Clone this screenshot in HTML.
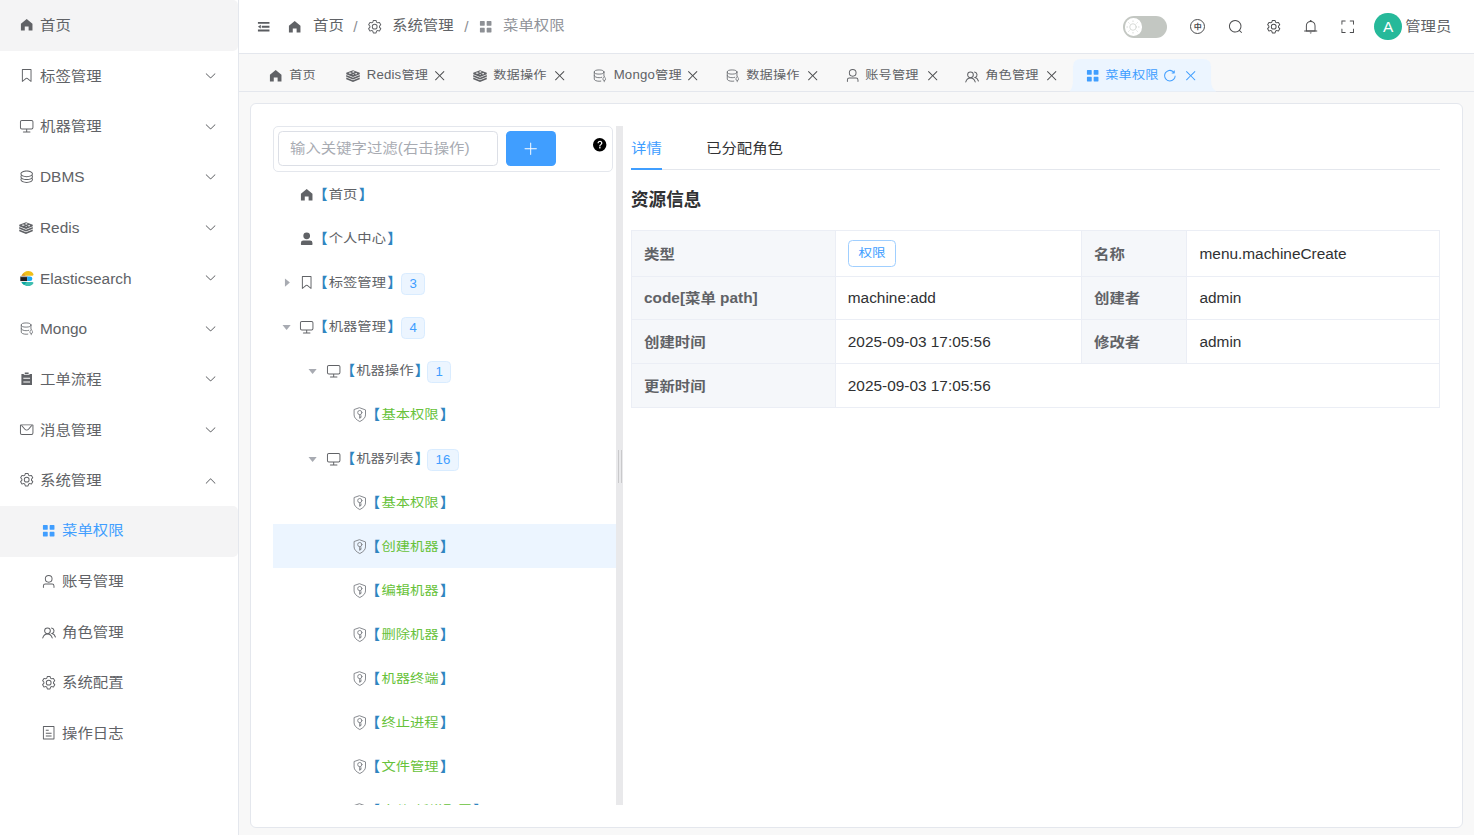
<!DOCTYPE html>
<html lang="zh-CN"><head><meta charset="utf-8"><title>菜单权限</title>
<style>
html,body{margin:0;padding:0}
body{width:1474px;height:835px;overflow:hidden;position:relative;background:#f8f8f8;font-family:"Liberation Sans","Noto Sans CJK SC",sans-serif;-webkit-font-smoothing:antialiased}
.b,.t,.ic{position:absolute;box-sizing:border-box}
.t{white-space:nowrap}
.c{display:inline-block;transform:translateY(.06em) scaleY(.86)}
.k .c{transform:translateY(.035em) scaleY(.98)}
.ns .c{transform:translateY(.03em) scaleY(1.03)}
.ic{display:block;overflow:visible}
</style></head><body>
<div class="b" style="left:0px;top:0px;width:239px;height:835px;background:#fff;border-right:1px solid #e4e7ed"></div>
<div class="b" style="left:0px;top:0px;width:237.6px;height:50.6px;background:#f4f4f5;border-radius:0 5px 5px 0"></div>
<div class="b" style="left:0px;top:506.2px;width:237.6px;height:50.5px;background:#f4f4f5;border-radius:0 5px 5px 0"></div>
<svg class="ic" style="left:18.7px;top:17.18px;width:15.4px;height:15.4px;" viewBox="0 0 1024 1024" fill="#606266"><path d="M512 128 128 447.936V896h255.936V640H640v256h255.936V447.936z"/></svg>
<div class="t " style="left:40px;top:13px;height:24px;line-height:24px;font-size:15.4px;color:#606266;"><span class="c">首页</span></div>
<svg class="ic" style="left:18.7px;top:67.76px;width:15.4px;height:15.4px;" viewBox="0 0 1024 1024" fill="#606266"><path d="M256 128v698.88l196.032-156.864a96 96 0 0 1 119.936 0L768 826.816V128zm-32-64h576a32 32 0 0 1 32 32v797.44a32 32 0 0 1-51.968 24.96L531.968 720a32 32 0 0 0-39.936 0L243.968 918.4A32 32 0 0 1 192 893.44V96a32 32 0 0 1 32-32"/></svg>
<div class="t " style="left:40px;top:64px;height:24px;line-height:24px;font-size:15.4px;color:#606266;"><span class="c">标签管理</span></div>
<svg class="ic" style="left:203.7px;top:68.96px;width:13.2px;height:13.2px;" viewBox="0 0 1024 1024" fill="#606266"><path d="M831.872 340.864 512 652.672 192.128 340.864a30.592 30.592 0 0 0-42.752 0 29.12 29.12 0 0 0 0 41.6L489.664 714.24a32 32 0 0 0 44.672 0l340.288-331.712a29.12 29.12 0 0 0 0-41.728 30.592 30.592 0 0 0-42.752 0z"/></svg>
<svg class="ic" style="left:18.7px;top:118.33px;width:15.4px;height:15.4px;" viewBox="0 0 1024 1024" fill="#606266"><path d="M544 768v128h192a32 32 0 1 1 0 64H288a32 32 0 1 1 0-64h192V768H192A128 128 0 0 1 64 640V256a128 128 0 0 1 128-128h640a128 128 0 0 1 128 128v384a128 128 0 0 1-128 128zM192 192a64 64 0 0 0-64 64v384a64 64 0 0 0 64 64h640a64 64 0 0 0 64-64V256a64 64 0 0 0-64-64z"/></svg>
<div class="t " style="left:40px;top:114px;height:24px;line-height:24px;font-size:15.4px;color:#606266;"><span class="c">机器管理</span></div>
<svg class="ic" style="left:203.7px;top:119.53px;width:13.2px;height:13.2px;" viewBox="0 0 1024 1024" fill="#606266"><path d="M831.872 340.864 512 652.672 192.128 340.864a30.592 30.592 0 0 0-42.752 0 29.12 29.12 0 0 0 0 41.6L489.664 714.24a32 32 0 0 0 44.672 0l340.288-331.712a29.12 29.12 0 0 0 0-41.728 30.592 30.592 0 0 0-42.752 0z"/></svg>
<svg class="ic" style="left:18.7px;top:168.9px;width:15.4px;height:15.4px;" viewBox="0 0 1024 1024" fill="#606266"><path d="m161.92 580.736 29.888 58.88C171.328 659.776 160 681.728 160 704c0 82.304 155.328 160 352 160s352-77.696 352-160c0-22.272-11.392-44.16-31.808-64.32l30.464-58.432C903.936 615.808 928 657.664 928 704c0 129.728-188.544 224-416 224S96 833.728 96 704c0-46.592 24.32-88.576 65.92-123.264"/><path d="m161.92 388.736 29.888 58.88C171.328 467.84 160 489.792 160 512c0 82.304 155.328 160 352 160s352-77.696 352-160c0-22.272-11.392-44.16-31.808-64.32l30.464-58.432C903.936 423.808 928 465.664 928 512c0 129.728-188.544 224-416 224S96 641.728 96 512c0-46.592 24.32-88.576 65.92-123.264"/><path d="M512 544c-227.456 0-416-94.272-416-224S284.544 96 512 96s416 94.272 416 224-188.544 224-416 224m0-64c196.672 0 352-77.696 352-160S708.672 160 512 160s-352 77.696-352 160 155.328 160 352 160"/></svg>
<div class="t " style="left:40px;top:165px;height:24px;line-height:24px;font-size:15.4px;color:#606266;">DBMS</div>
<svg class="ic" style="left:203.7px;top:170.1px;width:13.2px;height:13.2px;" viewBox="0 0 1024 1024" fill="#606266"><path d="M831.872 340.864 512 652.672 192.128 340.864a30.592 30.592 0 0 0-42.752 0 29.12 29.12 0 0 0 0 41.6L489.664 714.24a32 32 0 0 0 44.672 0l340.288-331.712a29.12 29.12 0 0 0 0-41.728 30.592 30.592 0 0 0-42.752 0z"/></svg>
<svg class="ic" style="left:19.3px;top:221.87px;width:14.0px;height:12.0px;" viewBox="0 0 24 20.6"><g fill="#606266"><path d="M12 .3 23.600 4.900v2.500L12 12 .4 7.400V4.900z"/><path d="M.4 8.500 12 13.100 23.600 8.500v3.200L12 16.300.4 11.700z"/><path d="M.4 12.800 12 17.400 23.600 12.800v3.200L12 20.600.4 16z"/></g><g fill="#fff"><ellipse cx="7.200" cy="5.300" rx="2.700" ry="1.150"/><path d="M12.600 1.600l.8 1 1.700.1-1.200.8.400 1.100-1.700-.5-1.700.5.400-1.100-1.200-.8 1.700-.1z"/><path d="M14.200 6.600 19.400 4.600 17.600 7.700z"/><path d="M10.300 7.900 12.600 7l1.200 1.700z"/></g></svg>
<div class="t " style="left:40px;top:216px;height:24px;line-height:24px;font-size:15.4px;color:#606266;">Redis</div>
<svg class="ic" style="left:203.7px;top:220.67px;width:13.2px;height:13.2px;" viewBox="0 0 1024 1024" fill="#606266"><path d="M831.872 340.864 512 652.672 192.128 340.864a30.592 30.592 0 0 0-42.752 0 29.12 29.12 0 0 0 0 41.6L489.664 714.24a32 32 0 0 0 44.672 0l340.288-331.712a29.12 29.12 0 0 0 0-41.728 30.592 30.592 0 0 0-42.752 0z"/></svg>
<svg class="ic" style="left:19.7px;top:270.8px;width:13.5px;height:15.1px;" viewBox="0 0 13.5 15.1"><path d="M1.400 4.800C2.900 1.700 5.500 0 8.200 0c2.400 0 4.400 1.300 5.200 3.100.300.800-.2 1.700-1.100 1.700z" fill="#f0bf1a"/><path d="M1.400 4.800 3.700 2.200 5.600 4.800z" fill="#e2962c"/><path d="M.3 5.400h7v4.700h-7z" fill="#231f20"/><path d="M.3 5.400h6.800v.7H.3z" fill="#d0d0d0"/><path d="M7.200 5.400h2.800a2.350 2.350 0 0 1 0 4.700H7.200z" fill="#1ba9f5"/><path d="M1.400 10.900h10.900c.9 0 1.400.9 1 1.600-.9 1.500-2.800 2.600-5.100 2.600-2.700 0-5.300-1.500-6.800-4.200z" fill="#3ebeb0"/><path d="M1.400 10.900h5.300l-2.600 3c-1.100-.7-2-1.700-2.700-3z" fill="#07a5a0"/></svg>
<div class="t " style="left:40px;top:267px;height:24px;line-height:24px;font-size:15.4px;color:#606266;">Elasticsearch</div>
<svg class="ic" style="left:203.7px;top:271.23px;width:13.2px;height:13.2px;" viewBox="0 0 1024 1024" fill="#606266"><path d="M831.872 340.864 512 652.672 192.128 340.864a30.592 30.592 0 0 0-42.752 0 29.12 29.12 0 0 0 0 41.6L489.664 714.24a32 32 0 0 0 44.672 0l340.288-331.712a29.12 29.12 0 0 0 0-41.728 30.592 30.592 0 0 0-42.752 0z"/></svg>
<svg class="ic" style="left:19.7px;top:321.71px;width:13.4px;height:13.4px;" viewBox="0 0 23 23"><g fill="none" stroke="#696c71" stroke-width="1.5" stroke-linecap="round"><ellipse cx="10.5" cy="5.2" rx="8.3" ry="3.6"/><path d="M2.2 5.2v12.2c0 2 3.7 3.6 8.3 3.6 1 0 2-.08 2.9-.2"/><path d="M18.8 5.2v6.2"/><path d="M2.2 11.3c0 2 3.7 3.6 8.3 3.6 1.7 0 3.300-.2 4.600-.6"/><path d="M19.300 13.2c-1.800 1.800-2.300 3.200-2.300 4.200a2.300 2.300 0 0 0 4.600 0c0-1-.5-2.400-2.300-4.200zM19.300 19.700v2.200" stroke-width="1.3"/></g></svg>
<div class="t " style="left:40px;top:317px;height:24px;line-height:24px;font-size:15.4px;color:#606266;">Mongo</div>
<svg class="ic" style="left:203.7px;top:321.81px;width:13.2px;height:13.2px;" viewBox="0 0 1024 1024" fill="#606266"><path d="M831.872 340.864 512 652.672 192.128 340.864a30.592 30.592 0 0 0-42.752 0 29.12 29.12 0 0 0 0 41.6L489.664 714.24a32 32 0 0 0 44.672 0l340.288-331.712a29.12 29.12 0 0 0 0-41.728 30.592 30.592 0 0 0-42.752 0z"/></svg>
<svg class="ic" style="left:18.7px;top:371.18px;width:15.4px;height:15.4px;" viewBox="0 0 1024 1024" fill="#606266"><path d="M704 192h160v736H160V192h160v64h384zM288 512h448v-64H288zm0 256h448v-64H288zm96-576V96h256v96z"/></svg>
<div class="t " style="left:40px;top:367px;height:24px;line-height:24px;font-size:15.4px;color:#606266;"><span class="c">工单流程</span></div>
<svg class="ic" style="left:203.7px;top:372.38px;width:13.2px;height:13.2px;" viewBox="0 0 1024 1024" fill="#606266"><path d="M831.872 340.864 512 652.672 192.128 340.864a30.592 30.592 0 0 0-42.752 0 29.12 29.12 0 0 0 0 41.6L489.664 714.24a32 32 0 0 0 44.672 0l340.288-331.712a29.12 29.12 0 0 0 0-41.728 30.592 30.592 0 0 0-42.752 0z"/></svg>
<svg class="ic" style="left:18.7px;top:421.75px;width:15.4px;height:15.4px;" viewBox="0 0 1024 1024" fill="#606266"><path d="M128 224v512a64 64 0 0 0 64 64h640a64 64 0 0 0 64-64V224zm0-64h768a64 64 0 0 1 64 64v512a128 128 0 0 1-128 128H192A128 128 0 0 1 64 736V224a64 64 0 0 1 64-64"/><path d="M904 224 656.512 506.88a192 192 0 0 1-289.024 0L120 224zm-698.944 0 210.56 240.704a128 128 0 0 0 192.704 0L818.944 224z"/></svg>
<div class="t " style="left:40px;top:418px;height:24px;line-height:24px;font-size:15.4px;color:#606266;"><span class="c">消息管理</span></div>
<svg class="ic" style="left:203.7px;top:422.95px;width:13.2px;height:13.2px;" viewBox="0 0 1024 1024" fill="#606266"><path d="M831.872 340.864 512 652.672 192.128 340.864a30.592 30.592 0 0 0-42.752 0 29.12 29.12 0 0 0 0 41.6L489.664 714.24a32 32 0 0 0 44.672 0l340.288-331.712a29.12 29.12 0 0 0 0-41.728 30.592 30.592 0 0 0-42.752 0z"/></svg>
<svg class="ic" style="left:18.7px;top:472.31px;width:15.4px;height:15.4px;" viewBox="0 0 1024 1024" fill="#606266"><path d="M600.704 64a32 32 0 0 1 30.464 22.208l35.2 109.376c14.784 7.232 28.928 15.36 42.432 24.512l112.384-24.192a32 32 0 0 1 34.432 15.36L944.32 364.8a32 32 0 0 1-4.032 37.504l-77.12 85.12a357.12 357.12 0 0 1 0 49.024l77.12 85.248a32 32 0 0 1 4.032 37.504l-88.704 153.6a32 32 0 0 1-34.432 15.296L708.8 803.904c-13.44 9.088-27.648 17.28-42.368 24.512l-35.264 109.376A32 32 0 0 1 600.704 960H423.296a32 32 0 0 1-30.464-22.208L357.696 828.48a351.616 351.616 0 0 1-42.56-24.64l-112.32 24.256a32 32 0 0 1-34.432-15.36L79.68 659.2a32 32 0 0 1 4.032-37.504l77.12-85.248a357.12 357.12 0 0 1 0-48.896l-77.12-85.248A32 32 0 0 1 79.68 364.8l88.704-153.6a32 32 0 0 1 34.432-15.296l112.32 24.256c13.568-9.152 27.776-17.408 42.56-24.64l35.2-109.312A32 32 0 0 1 423.232 64H600.64zm-23.424 64H446.72l-36.352 113.088-24.512 11.968a294.113 294.113 0 0 0-34.816 20.096l-22.656 15.36-116.224-25.088-65.28 113.152 79.68 88.192-1.92 27.136a293.12 293.12 0 0 0 0 40.192l1.92 27.136-79.808 88.192 65.344 113.152 116.224-25.024 22.656 15.296a294.113 294.113 0 0 0 34.816 20.096l24.512 11.968L446.72 896h130.688l36.48-113.152 24.448-11.904a288.282 288.282 0 0 0 34.752-20.096l22.592-15.296 116.288 25.024 65.28-113.152-79.744-88.192 1.92-27.136a293.12 293.12 0 0 0 0-40.256l-1.92-27.136 79.808-88.128-65.344-113.152-116.288 24.96-22.592-15.232a287.616 287.616 0 0 0-34.752-20.096l-24.448-11.904L577.344 128zM512 320a192 192 0 1 1 0 384 192 192 0 0 1 0-384m0 64a128 128 0 1 0 0 256 128 128 0 0 0 0-256"/></svg>
<div class="t " style="left:40px;top:468px;height:24px;line-height:24px;font-size:15.4px;color:#606266;"><span class="c">系统管理</span></div>
<svg class="ic" style="left:203.7px;top:473.51px;width:13.2px;height:13.2px;" viewBox="0 0 1024 1024" fill="#606266"><path d="m488.832 344.32-339.84 356.672a32 32 0 0 0 0 44.16l.384.384a29.44 29.44 0 0 0 42.688 0l320-335.872 319.872 335.872a29.44 29.44 0 0 0 42.688 0l.384-.384a32 32 0 0 0 0-44.16L535.168 344.32a32 32 0 0 0-46.336 0"/></svg>
<svg class="ic" style="left:40.7px;top:522.98px;width:15.4px;height:15.4px;" viewBox="0 0 1024 1024" fill="#409eff"><path d="M160 448a32 32 0 0 1-32-32V160.064a32 32 0 0 1 32-32h256a32 32 0 0 1 32 32V416a32 32 0 0 1-32 32zm448 0a32 32 0 0 1-32-32V160.064a32 32 0 0 1 32-32h255.936a32 32 0 0 1 32 32V416a32 32 0 0 1-32 32zM160 896a32 32 0 0 1-32-32V608a32 32 0 0 1 32-32h256a32 32 0 0 1 32 32v256a32 32 0 0 1-32 32zm448 0a32 32 0 0 1-32-32V608a32 32 0 0 1 32-32h255.936a32 32 0 0 1 32 32v256a32 32 0 0 1-32 32z"/></svg>
<div class="t " style="left:62px;top:518px;height:24px;line-height:24px;font-size:15.4px;color:#409eff;"><span class="c">菜单权限</span></div>
<svg class="ic" style="left:40.7px;top:573.55px;width:15.4px;height:15.4px;" viewBox="0 0 1024 1024" fill="#606266"><path d="M512 512a192 192 0 1 0 0-384 192 192 0 0 0 0 384m0 64a256 256 0 1 1 0-512 256 256 0 0 1 0 512m320 320v-96a96 96 0 0 0-96-96H288a96 96 0 0 0-96 96v96a32 32 0 1 1-64 0v-96a160 160 0 0 1 160-160h448a160 160 0 0 1 160 160v96a32 32 0 1 1-64 0"/></svg>
<div class="t " style="left:62px;top:569px;height:24px;line-height:24px;font-size:15.4px;color:#606266;"><span class="c">账号管理</span></div>
<svg class="ic" style="left:41.5px;top:627.02px;width:14.2px;height:11.4px;" viewBox="0 0 22.400 18.400"><g fill="none" stroke="#606266" stroke-width="1.65" stroke-linecap="round"><circle cx="8.6" cy="6.200" r="4.600"/><path d="M1 17.600c1.100-4 3.900-6.300 7.600-6.300s6.500 2.300 7.600 6.300"/><path d="M15.200 1.700a4.600 4.600 0 0 1 .9 8.900c2.400.7 4.300 2.600 5.300 5.500"/></g></svg>
<div class="t " style="left:62px;top:620px;height:24px;line-height:24px;font-size:15.4px;color:#606266;"><span class="c">角色管理</span></div>
<svg class="ic" style="left:40.7px;top:674.69px;width:15.4px;height:15.4px;" viewBox="0 0 1024 1024" fill="#606266"><path d="M600.704 64a32 32 0 0 1 30.464 22.208l35.2 109.376c14.784 7.232 28.928 15.36 42.432 24.512l112.384-24.192a32 32 0 0 1 34.432 15.36L944.32 364.8a32 32 0 0 1-4.032 37.504l-77.12 85.12a357.12 357.12 0 0 1 0 49.024l77.12 85.248a32 32 0 0 1 4.032 37.504l-88.704 153.6a32 32 0 0 1-34.432 15.296L708.8 803.904c-13.44 9.088-27.648 17.28-42.368 24.512l-35.264 109.376A32 32 0 0 1 600.704 960H423.296a32 32 0 0 1-30.464-22.208L357.696 828.48a351.616 351.616 0 0 1-42.56-24.64l-112.32 24.256a32 32 0 0 1-34.432-15.36L79.68 659.2a32 32 0 0 1 4.032-37.504l77.12-85.248a357.12 357.12 0 0 1 0-48.896l-77.12-85.248A32 32 0 0 1 79.68 364.8l88.704-153.6a32 32 0 0 1 34.432-15.296l112.32 24.256c13.568-9.152 27.776-17.408 42.56-24.64l35.2-109.312A32 32 0 0 1 423.232 64H600.64zm-23.424 64H446.72l-36.352 113.088-24.512 11.968a294.113 294.113 0 0 0-34.816 20.096l-22.656 15.36-116.224-25.088-65.28 113.152 79.68 88.192-1.92 27.136a293.12 293.12 0 0 0 0 40.192l1.92 27.136-79.808 88.192 65.344 113.152 116.224-25.024 22.656 15.296a294.113 294.113 0 0 0 34.816 20.096l24.512 11.968L446.72 896h130.688l36.48-113.152 24.448-11.904a288.282 288.282 0 0 0 34.752-20.096l22.592-15.296 116.288 25.024 65.28-113.152-79.744-88.192 1.92-27.136a293.12 293.12 0 0 0 0-40.256l-1.92-27.136 79.808-88.128-65.344-113.152-116.288 24.96-22.592-15.232a287.616 287.616 0 0 0-34.752-20.096l-24.448-11.904L577.344 128zM512 320a192 192 0 1 1 0 384 192 192 0 0 1 0-384m0 64a128 128 0 1 0 0 256 128 128 0 0 0 0-256"/></svg>
<div class="t " style="left:62px;top:670px;height:24px;line-height:24px;font-size:15.4px;color:#606266;"><span class="c">系统配置</span></div>
<svg class="ic" style="left:40.7px;top:725.26px;width:15.4px;height:15.4px;" viewBox="0 0 1024 1024" fill="#606266"><path d="M192 128v768h640V128zm-32-64h704a32 32 0 0 1 32 32v832a32 32 0 0 1-32 32H160a32 32 0 0 1-32-32V96a32 32 0 0 1 32-32m160 448h384v64H320zm0-192h192v64H320zm0 384h384v64H320z"/></svg>
<div class="t " style="left:62px;top:721px;height:24px;line-height:24px;font-size:15.4px;color:#606266;"><span class="c">操作日志</span></div>
<div class="b" style="left:239px;top:0px;width:1235px;height:54px;background:#fff;border-bottom:1px solid #e4e7ed"></div>
<svg class="ic" style="left:255.8px;top:18.9px;width:15.4px;height:15.4px;" viewBox="0 0 1024 1024" fill="#5a5c60"><path d="M896 192H128v128h768zm0 256H384v128h512zm0 256H128v128h768zM320 384 128 512l192 128z"/></svg>
<svg class="ic" style="left:286.7px;top:19.2px;width:15.4px;height:15.4px;" viewBox="0 0 1024 1024" fill="#606266"><path d="M512 128 128 447.936V896h255.936V640H640v256h255.936V447.936z"/></svg>
<div class="t " style="left:313px;top:13px;height:24px;line-height:24px;font-size:15.4px;color:#606266;"><span class="c">首页</span></div>
<div class="t " style="left:353.2px;top:15px;height:24px;line-height:24px;font-size:15.4px;color:#8d9095;">/</div>
<svg class="ic" style="left:366.9px;top:19.2px;width:15.4px;height:15.4px;" viewBox="0 0 1024 1024" fill="#606266"><path d="M600.704 64a32 32 0 0 1 30.464 22.208l35.2 109.376c14.784 7.232 28.928 15.36 42.432 24.512l112.384-24.192a32 32 0 0 1 34.432 15.36L944.32 364.8a32 32 0 0 1-4.032 37.504l-77.12 85.12a357.12 357.12 0 0 1 0 49.024l77.12 85.248a32 32 0 0 1 4.032 37.504l-88.704 153.6a32 32 0 0 1-34.432 15.296L708.8 803.904c-13.44 9.088-27.648 17.28-42.368 24.512l-35.264 109.376A32 32 0 0 1 600.704 960H423.296a32 32 0 0 1-30.464-22.208L357.696 828.48a351.616 351.616 0 0 1-42.56-24.64l-112.32 24.256a32 32 0 0 1-34.432-15.36L79.68 659.2a32 32 0 0 1 4.032-37.504l77.12-85.248a357.12 357.12 0 0 1 0-48.896l-77.12-85.248A32 32 0 0 1 79.68 364.8l88.704-153.6a32 32 0 0 1 34.432-15.296l112.32 24.256c13.568-9.152 27.776-17.408 42.56-24.64l35.2-109.312A32 32 0 0 1 423.232 64H600.64zm-23.424 64H446.72l-36.352 113.088-24.512 11.968a294.113 294.113 0 0 0-34.816 20.096l-22.656 15.36-116.224-25.088-65.28 113.152 79.68 88.192-1.92 27.136a293.12 293.12 0 0 0 0 40.192l1.92 27.136-79.808 88.192 65.344 113.152 116.224-25.024 22.656 15.296a294.113 294.113 0 0 0 34.816 20.096l24.512 11.968L446.72 896h130.688l36.48-113.152 24.448-11.904a288.282 288.282 0 0 0 34.752-20.096l22.592-15.296 116.288 25.024 65.28-113.152-79.744-88.192 1.92-27.136a293.12 293.12 0 0 0 0-40.256l-1.92-27.136 79.808-88.128-65.344-113.152-116.288 24.96-22.592-15.232a287.616 287.616 0 0 0-34.752-20.096l-24.448-11.904L577.344 128zM512 320a192 192 0 1 1 0 384 192 192 0 0 1 0-384m0 64a128 128 0 1 0 0 256 128 128 0 0 0 0-256"/></svg>
<div class="t " style="left:392px;top:13px;height:24px;line-height:24px;font-size:15.4px;color:#606266;"><span class="c">系统管理</span></div>
<div class="t " style="left:464.2px;top:15px;height:24px;line-height:24px;font-size:15.4px;color:#8d9095;">/</div>
<svg class="ic" style="left:477.9px;top:19.2px;width:15.4px;height:15.4px;" viewBox="0 0 1024 1024" fill="#8d9095"><path d="M160 448a32 32 0 0 1-32-32V160.064a32 32 0 0 1 32-32h256a32 32 0 0 1 32 32V416a32 32 0 0 1-32 32zm448 0a32 32 0 0 1-32-32V160.064a32 32 0 0 1 32-32h255.936a32 32 0 0 1 32 32V416a32 32 0 0 1-32 32zM160 896a32 32 0 0 1-32-32V608a32 32 0 0 1 32-32h256a32 32 0 0 1 32 32v256a32 32 0 0 1-32 32zm448 0a32 32 0 0 1-32-32V608a32 32 0 0 1 32-32h255.936a32 32 0 0 1 32 32v256a32 32 0 0 1-32 32z"/></svg>
<div class="t " style="left:503px;top:13px;height:24px;line-height:24px;font-size:15.4px;color:#909399;"><span class="c">菜单权限</span></div>
<div class="b" style="left:1123px;top:16px;width:44.1px;height:21.9px;background:#c3c7c2;border-radius:11px"></div>
<div class="b" style="left:1124.5px;top:18.1px;width:17.6px;height:17.6px;background:#fff;border-radius:50%"></div>
<svg class="ic" style="left:1125.3px;top:18.9px;width:16px;height:16px;" viewBox="0 0 24 24"><g fill="none" stroke="#c9cdc9" stroke-width="1.1" stroke-linecap="round"><circle cx="12" cy="12" r="4.900"/><path d="M12 2.800v1.100M12 20.100v1.100M2.800 12h1.100M20.100 12h1.100M5.500 5.500l.8.8M17.700 17.700l.8.8M5.500 18.500l.8-.8M17.700 6.300l.8-.8"/></g></svg>
<div class="b" style="left:1190.1px;top:19.2px;width:15.2px;height:15.2px;border:1.200px solid #4c4d4f;border-radius:50%"></div>
<div class="t " style="left:1193.7px;top:21px;height:12px;line-height:12px;font-size:8px;color:#4c4d4f;font-weight:700;"><span class="c">中</span></div>
<svg class="ic" style="left:1227.9px;top:19.3px;width:15.4px;height:15.4px;" viewBox="0 0 1024 1024" fill="#4c4d4f"><path d="m795.904 750.72 124.992 124.928a32 32 0 0 1-45.248 45.248L750.656 795.904a416 416 0 1 1 45.248-45.248zM480 832a352 352 0 1 0 0-704 352 352 0 0 0 0 704"/></svg>
<svg class="ic" style="left:1265.9px;top:19.3px;width:15.4px;height:15.4px;" viewBox="0 0 1024 1024" fill="#4c4d4f"><path d="M600.704 64a32 32 0 0 1 30.464 22.208l35.2 109.376c14.784 7.232 28.928 15.36 42.432 24.512l112.384-24.192a32 32 0 0 1 34.432 15.36L944.32 364.8a32 32 0 0 1-4.032 37.504l-77.12 85.12a357.12 357.12 0 0 1 0 49.024l77.12 85.248a32 32 0 0 1 4.032 37.504l-88.704 153.6a32 32 0 0 1-34.432 15.296L708.8 803.904c-13.44 9.088-27.648 17.28-42.368 24.512l-35.264 109.376A32 32 0 0 1 600.704 960H423.296a32 32 0 0 1-30.464-22.208L357.696 828.48a351.616 351.616 0 0 1-42.56-24.64l-112.32 24.256a32 32 0 0 1-34.432-15.36L79.68 659.2a32 32 0 0 1 4.032-37.504l77.12-85.248a357.12 357.12 0 0 1 0-48.896l-77.12-85.248A32 32 0 0 1 79.68 364.8l88.704-153.6a32 32 0 0 1 34.432-15.296l112.32 24.256c13.568-9.152 27.776-17.408 42.56-24.64l35.2-109.312A32 32 0 0 1 423.232 64H600.64zm-23.424 64H446.72l-36.352 113.088-24.512 11.968a294.113 294.113 0 0 0-34.816 20.096l-22.656 15.36-116.224-25.088-65.28 113.152 79.68 88.192-1.92 27.136a293.12 293.12 0 0 0 0 40.192l1.92 27.136-79.808 88.192 65.344 113.152 116.224-25.024 22.656 15.296a294.113 294.113 0 0 0 34.816 20.096l24.512 11.968L446.72 896h130.688l36.48-113.152 24.448-11.904a288.282 288.282 0 0 0 34.752-20.096l22.592-15.296 116.288 25.024 65.28-113.152-79.744-88.192 1.92-27.136a293.12 293.12 0 0 0 0-40.256l-1.92-27.136 79.808-88.128-65.344-113.152-116.288 24.96-22.592-15.232a287.616 287.616 0 0 0-34.752-20.096l-24.448-11.904L577.344 128zM512 320a192 192 0 1 1 0 384 192 192 0 0 1 0-384m0 64a128 128 0 1 0 0 256 128 128 0 0 0 0-256"/></svg>
<svg class="ic" style="left:1302.6px;top:19.3px;width:15.4px;height:15.4px;" viewBox="0 0 1024 1024" fill="#4c4d4f"><path d="M512 64a64 64 0 0 1 64 64v64H448v-64a64 64 0 0 1 64-64"/><path d="M256 768h512V448a256 256 0 1 0-512 0zm256-640a320 320 0 0 1 320 320v384H192V448a320 320 0 0 1 320-320"/><path d="M96 768h832q32 0 32 32t-32 32H96q-32 0-32-32t32-32m352 128h128a64 64 0 0 1-128 0"/></svg>
<svg class="ic" style="left:1339.9px;top:19.3px;width:15.4px;height:15.4px;" viewBox="0 0 1024 1024" fill="#4c4d4f"><path d="m160 96.064 192 .192a32 32 0 0 1 0 64l-192-.192V352a32 32 0 0 1-64 0V96h64zm0 831.872V928H96V672a32 32 0 1 1 64 0v191.936l192-.192a32 32 0 1 1 0 64zM864 96.064V96h64v256a32 32 0 1 1-64 0V160.064l-192 .192a32 32 0 1 1 0-64l192-.192zm0 831.872-192-.192a32 32 0 0 1 0-64l192 .192V672a32 32 0 1 1 64 0v256h-64z"/></svg>
<div class="b" style="left:1374.1px;top:12.6px;width:27.8px;height:27.8px;background:#26b99a;border-radius:50%"></div>
<div class="t " style="left:1382.9px;top:17px;height:20px;line-height:20px;font-size:15.4px;color:#fff;">A</div>
<div class="t " style="left:1405.2px;top:14px;height:24px;line-height:24px;font-size:15.4px;color:#606266;"><span class="c">管理员</span></div>
<div class="b" style="left:239px;top:54px;width:1235px;height:38px;background:#f8f8f8;border-bottom:1px solid #e4e7ed"></div>
<svg class="ic" style="left:1068px;top:58.8px;width:150px;height:32.4px;" viewBox="0 0 150 32.4"><path d="M1.500 32.400C3.500 30 4.900 27 4.900 22V8Q4.900 0 12.900 0H135.100Q143.100 0 143.100 8V22C143.100 27 144.800 30 148.300 32.400z" fill="#ecf5ff"/></svg>
<svg class="ic" style="left:268.0px;top:68.0px;width:15.4px;height:15.4px;" viewBox="0 0 1024 1024" fill="#606266"><path d="M512 128 128 447.936V896h255.936V640H640v256h255.936V447.936z"/></svg>
<div class="t " style="left:289.2px;top:65px;height:20px;line-height:20px;font-size:13.2px;color:#606266;letter-spacing:.2px;"><span class="c">首页</span></div>
<svg class="ic" style="left:345.8px;top:70.1px;width:14.0px;height:12.0px;" viewBox="0 0 24 20.6"><g fill="#606266"><path d="M12 .3 23.600 4.900v2.500L12 12 .4 7.400V4.900z"/><path d="M.4 8.500 12 13.100 23.600 8.500v3.200L12 16.300.4 11.700z"/><path d="M.4 12.800 12 17.400 23.600 12.800v3.200L12 20.600.4 16z"/></g><g fill="#fff"><ellipse cx="7.200" cy="5.300" rx="2.700" ry="1.150"/><path d="M12.600 1.600l.8 1 1.700.1-1.200.8.400 1.100-1.700-.5-1.700.5.400-1.100-1.200-.8 1.700-.1z"/><path d="M14.200 6.600 19.400 4.600 17.600 7.700z"/><path d="M10.300 7.900 12.600 7l1.200 1.700z"/></g></svg>
<div class="t " style="left:366.7px;top:65px;height:20px;line-height:20px;font-size:13.2px;color:#606266;letter-spacing:.2px;">Redis<span class="c">管理</span></div>
<svg class="ic" style="left:432.0px;top:67.9px;width:15.4px;height:15.4px;" viewBox="0 0 1024 1024" fill="#4c4d4f"><path d="M764.288 214.592 512 466.88 259.712 214.592a31.936 31.936 0 0 0-45.12 45.12L466.752 512 214.528 764.224a31.936 31.936 0 1 0 45.12 45.184L512 557.184l252.288 252.288a31.936 31.936 0 0 0 45.12-45.12L557.12 512.064l252.288-252.352a31.936 31.936 0 1 0-45.12-45.184z"/></svg>
<svg class="ic" style="left:472.8px;top:70.1px;width:14.0px;height:12.0px;" viewBox="0 0 24 20.6"><g fill="#606266"><path d="M12 .3 23.600 4.900v2.500L12 12 .4 7.400V4.900z"/><path d="M.4 8.500 12 13.100 23.600 8.500v3.200L12 16.300.4 11.700z"/><path d="M.4 12.800 12 17.400 23.600 12.800v3.200L12 20.600.4 16z"/></g><g fill="#fff"><ellipse cx="7.200" cy="5.300" rx="2.700" ry="1.150"/><path d="M12.600 1.600l.8 1 1.700.1-1.200.8.400 1.100-1.700-.5-1.700.5.400-1.100-1.200-.8 1.700-.1z"/><path d="M14.200 6.600 19.400 4.600 17.600 7.700z"/><path d="M10.300 7.900 12.600 7l1.200 1.700z"/></g></svg>
<div class="t " style="left:493.2px;top:65px;height:20px;line-height:20px;font-size:13.2px;color:#606266;letter-spacing:.2px;"><span class="c">数据操作</span></div>
<svg class="ic" style="left:552.0px;top:67.9px;width:15.4px;height:15.4px;" viewBox="0 0 1024 1024" fill="#4c4d4f"><path d="M764.288 214.592 512 466.88 259.712 214.592a31.936 31.936 0 0 0-45.12 45.12L466.752 512 214.528 764.224a31.936 31.936 0 1 0 45.12 45.184L512 557.184l252.288 252.288a31.936 31.936 0 0 0 45.12-45.12L557.12 512.064l252.288-252.352a31.936 31.936 0 1 0-45.12-45.184z"/></svg>
<svg class="ic" style="left:592.5px;top:68.8px;width:13.4px;height:13.4px;" viewBox="0 0 23 23"><g fill="none" stroke="#696c71" stroke-width="1.5" stroke-linecap="round"><ellipse cx="10.5" cy="5.2" rx="8.3" ry="3.6"/><path d="M2.2 5.2v12.2c0 2 3.7 3.6 8.3 3.6 1 0 2-.08 2.9-.2"/><path d="M18.8 5.2v6.2"/><path d="M2.2 11.3c0 2 3.7 3.6 8.3 3.6 1.7 0 3.300-.2 4.600-.6"/><path d="M19.300 13.2c-1.800 1.800-2.300 3.200-2.300 4.200a2.300 2.300 0 0 0 4.600 0c0-1-.5-2.400-2.300-4.200zM19.300 19.700v2.200" stroke-width="1.3"/></g></svg>
<div class="t " style="left:613.7px;top:65px;height:20px;line-height:20px;font-size:13.2px;color:#606266;letter-spacing:.2px;">Mongo<span class="c">管理</span></div>
<svg class="ic" style="left:685.0px;top:67.9px;width:15.4px;height:15.4px;" viewBox="0 0 1024 1024" fill="#4c4d4f"><path d="M764.288 214.592 512 466.88 259.712 214.592a31.936 31.936 0 0 0-45.12 45.12L466.752 512 214.528 764.224a31.936 31.936 0 1 0 45.12 45.184L512 557.184l252.288 252.288a31.936 31.936 0 0 0 45.12-45.12L557.12 512.064l252.288-252.352a31.936 31.936 0 1 0-45.12-45.184z"/></svg>
<svg class="ic" style="left:725.7px;top:68.8px;width:13.4px;height:13.4px;" viewBox="0 0 23 23"><g fill="none" stroke="#696c71" stroke-width="1.5" stroke-linecap="round"><ellipse cx="10.5" cy="5.2" rx="8.3" ry="3.6"/><path d="M2.2 5.2v12.2c0 2 3.7 3.6 8.3 3.6 1 0 2-.08 2.9-.2"/><path d="M18.8 5.2v6.2"/><path d="M2.2 11.3c0 2 3.7 3.6 8.3 3.6 1.7 0 3.300-.2 4.600-.6"/><path d="M19.300 13.2c-1.800 1.800-2.300 3.200-2.300 4.200a2.300 2.300 0 0 0 4.600 0c0-1-.5-2.400-2.300-4.200zM19.300 19.700v2.200" stroke-width="1.3"/></g></svg>
<div class="t " style="left:746.2px;top:65px;height:20px;line-height:20px;font-size:13.2px;color:#606266;letter-spacing:.2px;"><span class="c">数据操作</span></div>
<svg class="ic" style="left:805.0px;top:67.9px;width:15.4px;height:15.4px;" viewBox="0 0 1024 1024" fill="#4c4d4f"><path d="M764.288 214.592 512 466.88 259.712 214.592a31.936 31.936 0 0 0-45.12 45.12L466.752 512 214.528 764.224a31.936 31.936 0 1 0 45.12 45.184L512 557.184l252.288 252.288a31.936 31.936 0 0 0 45.12-45.12L557.12 512.064l252.288-252.352a31.936 31.936 0 1 0-45.12-45.184z"/></svg>
<svg class="ic" style="left:844.6px;top:68.0px;width:15.4px;height:15.4px;" viewBox="0 0 1024 1024" fill="#606266"><path d="M512 512a192 192 0 1 0 0-384 192 192 0 0 0 0 384m0 64a256 256 0 1 1 0-512 256 256 0 0 1 0 512m320 320v-96a96 96 0 0 0-96-96H288a96 96 0 0 0-96 96v96a32 32 0 1 1-64 0v-96a160 160 0 0 1 160-160h448a160 160 0 0 1 160 160v96a32 32 0 1 1-64 0"/></svg>
<div class="t " style="left:865.2px;top:65px;height:20px;line-height:20px;font-size:13.2px;color:#606266;letter-spacing:.2px;"><span class="c">账号管理</span></div>
<svg class="ic" style="left:925.0px;top:67.9px;width:15.4px;height:15.4px;" viewBox="0 0 1024 1024" fill="#4c4d4f"><path d="M764.288 214.592 512 466.88 259.712 214.592a31.936 31.936 0 0 0-45.12 45.12L466.752 512 214.528 764.224a31.936 31.936 0 1 0 45.12 45.184L512 557.184l252.288 252.288a31.936 31.936 0 0 0 45.12-45.12L557.12 512.064l252.288-252.352a31.936 31.936 0 1 0-45.12-45.184z"/></svg>
<svg class="ic" style="left:965.1px;top:70.8px;width:14.2px;height:11.4px;" viewBox="0 0 22.400 18.400"><g fill="none" stroke="#606266" stroke-width="1.65" stroke-linecap="round"><circle cx="8.6" cy="6.200" r="4.600"/><path d="M1 17.600c1.100-4 3.900-6.300 7.600-6.300s6.500 2.300 7.600 6.300"/><path d="M15.200 1.700a4.600 4.600 0 0 1 .9 8.900c2.400.7 4.300 2.600 5.300 5.500"/></g></svg>
<div class="t " style="left:985.2px;top:65px;height:20px;line-height:20px;font-size:13.2px;color:#606266;letter-spacing:.2px;"><span class="c">角色管理</span></div>
<svg class="ic" style="left:1044.0px;top:67.9px;width:15.4px;height:15.4px;" viewBox="0 0 1024 1024" fill="#4c4d4f"><path d="M764.288 214.592 512 466.88 259.712 214.592a31.936 31.936 0 0 0-45.12 45.12L466.752 512 214.528 764.224a31.936 31.936 0 1 0 45.12 45.184L512 557.184l252.288 252.288a31.936 31.936 0 0 0 45.12-45.12L557.12 512.064l252.288-252.352a31.936 31.936 0 1 0-45.12-45.184z"/></svg>
<svg class="ic" style="left:1084.5px;top:68.0px;width:15.4px;height:15.4px;" viewBox="0 0 1024 1024" fill="#409eff"><path d="M160 448a32 32 0 0 1-32-32V160.064a32 32 0 0 1 32-32h256a32 32 0 0 1 32 32V416a32 32 0 0 1-32 32zm448 0a32 32 0 0 1-32-32V160.064a32 32 0 0 1 32-32h255.936a32 32 0 0 1 32 32V416a32 32 0 0 1-32 32zM160 896a32 32 0 0 1-32-32V608a32 32 0 0 1 32-32h256a32 32 0 0 1 32 32v256a32 32 0 0 1-32 32zm448 0a32 32 0 0 1-32-32V608a32 32 0 0 1 32-32h255.936a32 32 0 0 1 32 32v256a32 32 0 0 1-32 32z"/></svg>
<div class="t " style="left:1105.2px;top:65px;height:20px;line-height:20px;font-size:13.2px;color:#409eff;letter-spacing:.2px;"><span class="c">菜单权限</span></div>
<svg class="ic" style="left:1162.2px;top:68.2px;width:15.4px;height:15.4px;" viewBox="0 0 1024 1024" fill="#409eff"><path d="M784.512 230.272v-50.56a32 32 0 1 1 64 0v149.056a32 32 0 0 1-32 32H667.52a32 32 0 1 1 0-64h92.992A320 320 0 1 0 524.8 833.152a320 320 0 0 0 320-320h64a384 384 0 0 1-384 384 384 384 0 0 1-384-384 384 384 0 0 1 643.712-282.88z"/></svg>
<svg class="ic" style="left:1183.0px;top:67.9px;width:15.4px;height:15.4px;" viewBox="0 0 1024 1024" fill="#409eff"><path d="M764.288 214.592 512 466.88 259.712 214.592a31.936 31.936 0 0 0-45.12 45.12L466.752 512 214.528 764.224a31.936 31.936 0 1 0 45.12 45.184L512 557.184l252.288 252.288a31.936 31.936 0 0 0 45.12-45.12L557.12 512.064l252.288-252.352a31.936 31.936 0 1 0-45.12-45.184z"/></svg>
<div class="b" style="left:250px;top:103px;width:1213px;height:724.5px;background:#fff;border:1px solid #e4e7ed;border-radius:6px"></div>
<div class="b" style="left:273px;top:126px;width:340px;height:46px;background:#fff;border:1px solid #e4e7ed;border-radius:5px"></div>
<div class="b" style="left:278px;top:131px;width:220px;height:35px;background:#fff;border:1px solid #dcdfe6;border-radius:4.400px"></div>
<div class="t " style="left:290px;top:136px;height:24px;line-height:24px;font-size:15.4px;color:#a8abb2;"><span class="c">输入关键字过滤</span>(<span class="c">右击操作</span>)</div>
<div class="b" style="left:506px;top:131px;width:50px;height:35px;background:#409eff;border-radius:4.400px"></div>
<svg class="ic" style="left:523.3px;top:140.9px;width:15.4px;height:15.4px;" viewBox="0 0 1024 1024" fill="#fff"><path d="M480 480V128a32 32 0 0 1 64 0v352h352a32 32 0 1 1 0 64H544v352a32 32 0 1 1-64 0V544H128a32 32 0 0 1 0-64z"/></svg>
<svg class="ic" style="left:591.9px;top:136.9px;width:15.4px;height:15.4px;" viewBox="0 0 1024 1024" fill="#000"><path d="M512 64a448 448 0 1 1 0 896 448 448 0 0 1 0-896m23.744 191.488c-52.096 0-92.928 14.784-123.2 44.352-30.976 29.568-45.76 70.4-45.76 122.496h80.256c0-29.568 5.632-52.8 17.6-68.992 13.376-19.712 35.2-28.864 66.176-28.864 23.936 0 42.944 6.336 56.32 19.712 12.672 13.376 19.712 31.68 19.712 54.912 0 17.6-6.336 34.496-19.008 49.984l-8.448 9.856c-45.76 40.832-73.216 70.4-82.368 89.408-9.856 19.008-14.08 42.24-14.08 68.992v9.856h80.96v-9.856c0-16.896 3.52-31.68 10.56-45.76 6.336-12.672 15.488-24.64 28.16-35.2 33.792-29.568 54.208-48.576 60.544-55.616 16.896-22.528 26.048-51.392 26.048-86.592 0-42.944-14.08-76.736-42.24-101.376-28.16-25.344-65.472-37.312-111.232-37.312zm-12.672 406.208a54.272 54.272 0 0 0-38.72 14.784 49.408 49.408 0 0 0-15.488 38.016c0 15.488 4.928 28.16 15.488 38.016A54.848 54.848 0 0 0 523.072 768c15.488 0 28.16-4.928 38.72-14.784a51.52 51.52 0 0 0 16.192-38.72 51.968 51.968 0 0 0-15.488-38.016 55.936 55.936 0 0 0-39.424-14.784z"/></svg>
<div class="b" style="left:616px;top:126px;width:7px;height:679px;background:#e9e9eb"></div>
<div class="b" style="left:618px;top:449.5px;width:1px;height:33px;background:#c9c9cb"></div>
<div class="b" style="left:621px;top:449.5px;width:1px;height:33px;background:#c9c9cb"></div>
<div class="b" style="left:273px;top:524px;width:343px;height:44px;background:#ecf5ff"></div>
<svg class="ic" style="left:298.9px;top:186.9px;width:15.4px;height:15.4px;" viewBox="0 0 1024 1024" fill="#606266"><path d="M512 128 128 447.936V896h255.936V640H640v256h255.936V447.936z"/></svg>
<div class="t " style="left:313.2px;top:183px;height:22px;line-height:22px;font-size:14.3px;color:#606266;"><span class="k" style="color:#2f85c0;font-weight:700;margin-right:1.300px"><span class="c">【</span></span><span style="color:#606266"><span class="c">首页</span></span><span class="k" style="color:#2f85c0;font-weight:700;margin-left:1.300px"><span class="c">】</span></span></div>
<svg class="ic" style="left:298.9px;top:230.9px;width:15.4px;height:15.4px;" viewBox="0 0 1024 1024" fill="#606266"><path d="M288 320a224 224 0 1 0 448 0 224 224 0 1 0-448 0m544 608H160a32 32 0 0 1-32-32v-96a160 160 0 0 1 160-160h448a160 160 0 0 1 160 160v96a32 32 0 0 1-32 32z"/></svg>
<div class="t " style="left:313.2px;top:227px;height:22px;line-height:22px;font-size:14.3px;color:#606266;"><span class="k" style="color:#2f85c0;font-weight:700;margin-right:1.300px"><span class="c">【</span></span><span style="color:#606266"><span class="c">个人中心</span></span><span class="k" style="color:#2f85c0;font-weight:700;margin-left:1.300px"><span class="c">】</span></span></div>
<svg class="ic" style="left:279.9px;top:275.9px;width:13.2px;height:13.2px;" viewBox="0 0 1024 1024" fill="#a8abb2"><path d="M384 192v640l384-320.064z"/></svg>
<svg class="ic" style="left:298.9px;top:274.9px;width:15.4px;height:15.4px;" viewBox="0 0 1024 1024" fill="#606266"><path d="M256 128v698.88l196.032-156.864a96 96 0 0 1 119.936 0L768 826.816V128zm-32-64h576a32 32 0 0 1 32 32v797.44a32 32 0 0 1-51.968 24.96L531.968 720a32 32 0 0 0-39.936 0L243.968 918.4A32 32 0 0 1 192 893.44V96a32 32 0 0 1 32-32"/></svg>
<div class="t " style="left:313.2px;top:271px;height:22px;line-height:22px;font-size:14.3px;color:#606266;"><span class="k" style="color:#2f85c0;font-weight:700;margin-right:1.300px"><span class="c">【</span></span><span style="color:#606266"><span class="c">标签管理</span></span><span class="k" style="color:#2f85c0;font-weight:700;margin-left:1.300px"><span class="c">】</span></span></div>
<div class="b" style="left:401.0px;top:273.05px;width:24.2px;height:21.5px;background:#ecf5ff;border:1px solid #d9ecff;border-radius:4.400px"></div>
<div class="t " style="left:401.0px;top:274px;height:20px;line-height:20px;font-size:13.2px;color:#409eff;width:24.2px;text-align:center;">3</div>
<svg class="ic" style="left:279.9px;top:319.9px;width:13.2px;height:13.2px; transform:rotate(90deg);" viewBox="0 0 1024 1024" fill="#a8abb2"><path d="M384 192v640l384-320.064z"/></svg>
<svg class="ic" style="left:298.9px;top:318.9px;width:15.4px;height:15.4px;" viewBox="0 0 1024 1024" fill="#606266"><path d="M544 768v128h192a32 32 0 1 1 0 64H288a32 32 0 1 1 0-64h192V768H192A128 128 0 0 1 64 640V256a128 128 0 0 1 128-128h640a128 128 0 0 1 128 128v384a128 128 0 0 1-128 128zM192 192a64 64 0 0 0-64 64v384a64 64 0 0 0 64 64h640a64 64 0 0 0 64-64V256a64 64 0 0 0-64-64z"/></svg>
<div class="t " style="left:313.2px;top:315px;height:22px;line-height:22px;font-size:14.3px;color:#606266;"><span class="k" style="color:#2f85c0;font-weight:700;margin-right:1.300px"><span class="c">【</span></span><span style="color:#606266"><span class="c">机器管理</span></span><span class="k" style="color:#2f85c0;font-weight:700;margin-left:1.300px"><span class="c">】</span></span></div>
<div class="b" style="left:401.0px;top:317.05px;width:24.2px;height:21.5px;background:#ecf5ff;border:1px solid #d9ecff;border-radius:4.400px"></div>
<div class="t " style="left:401.0px;top:318px;height:20px;line-height:20px;font-size:13.2px;color:#409eff;width:24.2px;text-align:center;">4</div>
<svg class="ic" style="left:305.9px;top:363.9px;width:13.2px;height:13.2px; transform:rotate(90deg);" viewBox="0 0 1024 1024" fill="#a8abb2"><path d="M384 192v640l384-320.064z"/></svg>
<svg class="ic" style="left:326.3px;top:362.9px;width:15.4px;height:15.4px;" viewBox="0 0 1024 1024" fill="#606266"><path d="M544 768v128h192a32 32 0 1 1 0 64H288a32 32 0 1 1 0-64h192V768H192A128 128 0 0 1 64 640V256a128 128 0 0 1 128-128h640a128 128 0 0 1 128 128v384a128 128 0 0 1-128 128zM192 192a64 64 0 0 0-64 64v384a64 64 0 0 0 64 64h640a64 64 0 0 0 64-64V256a64 64 0 0 0-64-64z"/></svg>
<div class="t " style="left:340.7px;top:359px;height:22px;line-height:22px;font-size:14.3px;color:#606266;"><span class="k" style="color:#2f85c0;font-weight:700;margin-right:1.300px"><span class="c">【</span></span><span style="color:#606266"><span class="c">机器操作</span></span><span class="k" style="color:#2f85c0;font-weight:700;margin-left:1.300px"><span class="c">】</span></span></div>
<div class="b" style="left:427.0px;top:361.05px;width:24.2px;height:21.5px;background:#ecf5ff;border:1px solid #d9ecff;border-radius:4.400px"></div>
<div class="t " style="left:427.0px;top:362px;height:20px;line-height:20px;font-size:13.2px;color:#409eff;width:24.2px;text-align:center;">1</div>
<svg class="ic" style="left:352.8px;top:406.8px;width:13.6px;height:15.4px;" viewBox="0 0 20 22.600"><g fill="none" stroke="#85888d" stroke-width="1.45" stroke-linejoin="round" stroke-linecap="round"><path d="M10 1.200 18.400 4.300v7.400c0 4-3.400 7.200-8.400 9.700C5 18.900 1.600 15.700 1.600 11.700V4.300z"/><circle cx="10" cy="8.200" r="3.100"/><path d="M10 11.300v5.400M10 13.400h2.400M10 15.400h1.600"/></g></svg>
<div class="t " style="left:365.8px;top:403px;height:22px;line-height:22px;font-size:14.3px;color:#67c23a;"><span class="k" style="color:#2f85c0;font-weight:700;margin-right:1.300px"><span class="c">【</span></span><span style="color:#67c23a"><span class="c">基本权限</span></span><span class="k" style="color:#2f85c0;font-weight:700;margin-left:1.300px"><span class="c">】</span></span></div>
<svg class="ic" style="left:305.9px;top:451.9px;width:13.2px;height:13.2px; transform:rotate(90deg);" viewBox="0 0 1024 1024" fill="#a8abb2"><path d="M384 192v640l384-320.064z"/></svg>
<svg class="ic" style="left:326.3px;top:450.9px;width:15.4px;height:15.4px;" viewBox="0 0 1024 1024" fill="#606266"><path d="M544 768v128h192a32 32 0 1 1 0 64H288a32 32 0 1 1 0-64h192V768H192A128 128 0 0 1 64 640V256a128 128 0 0 1 128-128h640a128 128 0 0 1 128 128v384a128 128 0 0 1-128 128zM192 192a64 64 0 0 0-64 64v384a64 64 0 0 0 64 64h640a64 64 0 0 0 64-64V256a64 64 0 0 0-64-64z"/></svg>
<div class="t " style="left:340.7px;top:447px;height:22px;line-height:22px;font-size:14.3px;color:#606266;"><span class="k" style="color:#2f85c0;font-weight:700;margin-right:1.300px"><span class="c">【</span></span><span style="color:#606266"><span class="c">机器列表</span></span><span class="k" style="color:#2f85c0;font-weight:700;margin-left:1.300px"><span class="c">】</span></span></div>
<div class="b" style="left:427.0px;top:449.05px;width:31.8px;height:21.5px;background:#ecf5ff;border:1px solid #d9ecff;border-radius:4.400px"></div>
<div class="t " style="left:427.0px;top:450px;height:20px;line-height:20px;font-size:13.2px;color:#409eff;width:31.8px;text-align:center;">16</div>
<svg class="ic" style="left:352.8px;top:494.8px;width:13.6px;height:15.4px;" viewBox="0 0 20 22.600"><g fill="none" stroke="#85888d" stroke-width="1.45" stroke-linejoin="round" stroke-linecap="round"><path d="M10 1.200 18.400 4.300v7.400c0 4-3.400 7.200-8.400 9.700C5 18.900 1.600 15.700 1.600 11.700V4.300z"/><circle cx="10" cy="8.200" r="3.100"/><path d="M10 11.300v5.400M10 13.400h2.400M10 15.400h1.600"/></g></svg>
<div class="t " style="left:365.8px;top:491px;height:22px;line-height:22px;font-size:14.3px;color:#67c23a;"><span class="k" style="color:#2f85c0;font-weight:700;margin-right:1.300px"><span class="c">【</span></span><span style="color:#67c23a"><span class="c">基本权限</span></span><span class="k" style="color:#2f85c0;font-weight:700;margin-left:1.300px"><span class="c">】</span></span></div>
<svg class="ic" style="left:352.8px;top:538.8px;width:13.6px;height:15.4px;" viewBox="0 0 20 22.600"><g fill="none" stroke="#85888d" stroke-width="1.45" stroke-linejoin="round" stroke-linecap="round"><path d="M10 1.200 18.400 4.300v7.400c0 4-3.400 7.200-8.400 9.700C5 18.900 1.600 15.700 1.600 11.700V4.300z"/><circle cx="10" cy="8.200" r="3.100"/><path d="M10 11.300v5.400M10 13.400h2.400M10 15.400h1.600"/></g></svg>
<div class="t " style="left:365.8px;top:535px;height:22px;line-height:22px;font-size:14.3px;color:#67c23a;"><span class="k" style="color:#2f85c0;font-weight:700;margin-right:1.300px"><span class="c">【</span></span><span style="color:#67c23a"><span class="c">创建机器</span></span><span class="k" style="color:#2f85c0;font-weight:700;margin-left:1.300px"><span class="c">】</span></span></div>
<svg class="ic" style="left:352.8px;top:582.8px;width:13.6px;height:15.4px;" viewBox="0 0 20 22.600"><g fill="none" stroke="#85888d" stroke-width="1.45" stroke-linejoin="round" stroke-linecap="round"><path d="M10 1.200 18.400 4.300v7.400c0 4-3.400 7.200-8.400 9.700C5 18.900 1.600 15.700 1.600 11.700V4.300z"/><circle cx="10" cy="8.200" r="3.100"/><path d="M10 11.300v5.400M10 13.400h2.400M10 15.400h1.600"/></g></svg>
<div class="t " style="left:365.8px;top:579px;height:22px;line-height:22px;font-size:14.3px;color:#67c23a;"><span class="k" style="color:#2f85c0;font-weight:700;margin-right:1.300px"><span class="c">【</span></span><span style="color:#67c23a"><span class="c">编辑机器</span></span><span class="k" style="color:#2f85c0;font-weight:700;margin-left:1.300px"><span class="c">】</span></span></div>
<svg class="ic" style="left:352.8px;top:626.8px;width:13.6px;height:15.4px;" viewBox="0 0 20 22.600"><g fill="none" stroke="#85888d" stroke-width="1.45" stroke-linejoin="round" stroke-linecap="round"><path d="M10 1.200 18.400 4.300v7.400c0 4-3.400 7.200-8.400 9.700C5 18.900 1.600 15.700 1.600 11.700V4.300z"/><circle cx="10" cy="8.200" r="3.100"/><path d="M10 11.300v5.400M10 13.400h2.400M10 15.400h1.600"/></g></svg>
<div class="t " style="left:365.8px;top:623px;height:22px;line-height:22px;font-size:14.3px;color:#67c23a;"><span class="k" style="color:#2f85c0;font-weight:700;margin-right:1.300px"><span class="c">【</span></span><span style="color:#67c23a"><span class="c">删除机器</span></span><span class="k" style="color:#2f85c0;font-weight:700;margin-left:1.300px"><span class="c">】</span></span></div>
<svg class="ic" style="left:352.8px;top:670.8px;width:13.6px;height:15.4px;" viewBox="0 0 20 22.600"><g fill="none" stroke="#85888d" stroke-width="1.45" stroke-linejoin="round" stroke-linecap="round"><path d="M10 1.200 18.400 4.300v7.400c0 4-3.400 7.200-8.400 9.700C5 18.900 1.600 15.700 1.600 11.700V4.300z"/><circle cx="10" cy="8.200" r="3.100"/><path d="M10 11.300v5.400M10 13.400h2.400M10 15.400h1.600"/></g></svg>
<div class="t " style="left:365.8px;top:667px;height:22px;line-height:22px;font-size:14.3px;color:#67c23a;"><span class="k" style="color:#2f85c0;font-weight:700;margin-right:1.300px"><span class="c">【</span></span><span style="color:#67c23a"><span class="c">机器终端</span></span><span class="k" style="color:#2f85c0;font-weight:700;margin-left:1.300px"><span class="c">】</span></span></div>
<svg class="ic" style="left:352.8px;top:714.8px;width:13.6px;height:15.4px;" viewBox="0 0 20 22.600"><g fill="none" stroke="#85888d" stroke-width="1.45" stroke-linejoin="round" stroke-linecap="round"><path d="M10 1.200 18.400 4.300v7.400c0 4-3.400 7.200-8.400 9.700C5 18.900 1.600 15.700 1.600 11.700V4.300z"/><circle cx="10" cy="8.200" r="3.100"/><path d="M10 11.300v5.400M10 13.400h2.400M10 15.400h1.600"/></g></svg>
<div class="t " style="left:365.8px;top:711px;height:22px;line-height:22px;font-size:14.3px;color:#67c23a;"><span class="k" style="color:#2f85c0;font-weight:700;margin-right:1.300px"><span class="c">【</span></span><span style="color:#67c23a"><span class="c">终止进程</span></span><span class="k" style="color:#2f85c0;font-weight:700;margin-left:1.300px"><span class="c">】</span></span></div>
<svg class="ic" style="left:352.8px;top:758.8px;width:13.6px;height:15.4px;" viewBox="0 0 20 22.600"><g fill="none" stroke="#85888d" stroke-width="1.45" stroke-linejoin="round" stroke-linecap="round"><path d="M10 1.200 18.400 4.300v7.400c0 4-3.400 7.200-8.400 9.700C5 18.900 1.600 15.700 1.600 11.700V4.300z"/><circle cx="10" cy="8.200" r="3.100"/><path d="M10 11.300v5.400M10 13.400h2.400M10 15.400h1.600"/></g></svg>
<div class="t " style="left:365.8px;top:755px;height:22px;line-height:22px;font-size:14.3px;color:#67c23a;"><span class="k" style="color:#2f85c0;font-weight:700;margin-right:1.300px"><span class="c">【</span></span><span style="color:#67c23a"><span class="c">文件管理</span></span><span class="k" style="color:#2f85c0;font-weight:700;margin-left:1.300px"><span class="c">】</span></span></div>
<div class="b" style="left:273px;top:788px;width:343px;height:17px;overflow:hidden">
<svg class="ic" style="left:79.7px;top:14.8px;width:13.6px;height:15.4px;" viewBox="0 0 20 22.600"><g fill="none" stroke="#85888d" stroke-width="1.45" stroke-linejoin="round" stroke-linecap="round"><path d="M10 1.200 18.400 4.300v7.400c0 4-3.400 7.200-8.400 9.700C5 18.900 1.600 15.700 1.600 11.700V4.300z"/><circle cx="10" cy="8.200" r="3.100"/><path d="M10 11.300v5.400M10 13.400h2.400M10 15.400h1.600"/></g></svg>
<div class="t " style="left:92.80000000000003px;top:11px;height:22px;line-height:22px;font-size:14.3px;color:#67c23a;"><span class="k" style="color:#2f85c0;font-weight:700;margin-right:1.300px"><span class="c">【</span></span><span style="color:#67c23a"><span class="c">文件</span>-<span class="c">新增配置</span></span><span class="k" style="color:#2f85c0;font-weight:700;margin-left:1.300px"><span class="c">】</span></span></div>
</div>
<div class="b" style="left:631px;top:169px;width:808.5px;height:1px;background:#e4e7ed"></div>
<div class="b" style="left:631px;top:168px;width:30.8px;height:2px;background:#409eff"></div>
<div class="t " style="left:631px;top:136px;height:24px;line-height:24px;font-size:15.4px;color:#409eff;"><span class="c">详情</span></div>
<div class="t " style="left:706px;top:136px;height:24px;line-height:24px;font-size:15.4px;color:#303133;"><span class="c">已分配角色</span></div>
<div class="t ns" style="left:631px;top:186px;height:26px;line-height:26px;font-size:17.6px;color:#303133;font-weight:700;"><span class="c">资源信息</span></div>
<div class="b" style="left:631px;top:230px;width:808.5px;height:178px;background:#fff;border:1px solid #ebeef5"></div>
<div class="b" style="left:631px;top:230px;width:204.5px;height:178px;background:#f5f7fa;border:1px solid #ebeef5"></div>
<div class="b" style="left:1081px;top:230px;width:105.59999999999991px;height:134px;background:#f5f7fa;border:1px solid #ebeef5"></div>
<div class="b" style="left:631px;top:276px;width:808.5px;height:1px;background:#ebeef5"></div>
<div class="b" style="left:631px;top:319px;width:808.5px;height:1px;background:#ebeef5"></div>
<div class="b" style="left:631px;top:363px;width:808.5px;height:1px;background:#ebeef5"></div>
<div class="t " style="left:644px;top:242px;height:24px;line-height:24px;font-size:15.4px;color:#606266;font-weight:700;"><span class="c">类型</span></div>
<div class="t " style="left:1094px;top:242px;height:24px;line-height:24px;font-size:15.4px;color:#606266;font-weight:700;"><span class="c">名称</span></div>
<div class="t " style="left:1199.5px;top:242px;height:24px;line-height:24px;font-size:15.4px;color:#303133;">menu.machineCreate</div>
<div class="t " style="left:644px;top:286px;height:24px;line-height:24px;font-size:15.4px;color:#606266;font-weight:700;">code[<span class="c">菜单</span> path]</div>
<div class="t " style="left:1094px;top:286px;height:24px;line-height:24px;font-size:15.4px;color:#606266;font-weight:700;"><span class="c">创建者</span></div>
<div class="t " style="left:847.8px;top:286px;height:24px;line-height:24px;font-size:15.4px;color:#303133;">machine:add</div>
<div class="t " style="left:1199.5px;top:286px;height:24px;line-height:24px;font-size:15.4px;color:#303133;">admin</div>
<div class="t " style="left:644px;top:330px;height:24px;line-height:24px;font-size:15.4px;color:#606266;font-weight:700;"><span class="c">创建时间</span></div>
<div class="t " style="left:1094px;top:330px;height:24px;line-height:24px;font-size:15.4px;color:#606266;font-weight:700;"><span class="c">修改者</span></div>
<div class="t " style="left:847.8px;top:330px;height:24px;line-height:24px;font-size:15.4px;color:#303133;">2025-09-03 17:05:56</div>
<div class="t " style="left:1199.5px;top:330px;height:24px;line-height:24px;font-size:15.4px;color:#303133;">admin</div>
<div class="t " style="left:644px;top:374px;height:24px;line-height:24px;font-size:15.4px;color:#606266;font-weight:700;"><span class="c">更新时间</span></div>
<div class="t " style="left:847.8px;top:374px;height:24px;line-height:24px;font-size:15.4px;color:#303133;">2025-09-03 17:05:56</div>
<div class="b" style="left:848px;top:240px;width:48px;height:26.6px;background:#fff;border:1px solid #a0cfff;border-radius:4.400px"></div>
<div class="t " style="left:848px;top:243px;height:20px;line-height:20px;font-size:13.6px;color:#409eff;width:48px;text-align:center;"><span class="c">权限</span></div>
</body></html>
